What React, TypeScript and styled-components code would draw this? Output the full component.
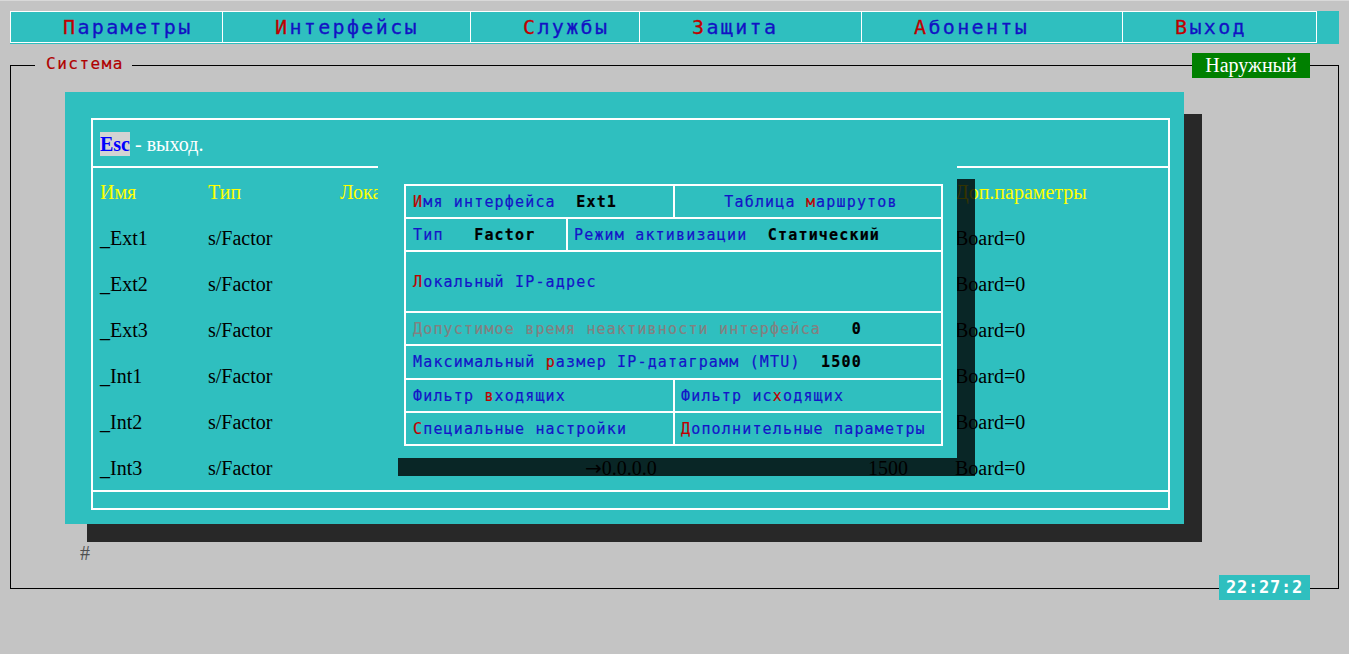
import React from 'react';
import styled, { createGlobalStyle } from 'styled-components';

const CYAN = '#2fbfbf';
const BG = '#c4c4c4';
const MONO = '"DejaVu Sans Mono", "Liberation Mono", monospace';
const SERIF = '"Liberation Serif", "Times New Roman", "DejaVu Serif", serif';

const GlobalStyle = createGlobalStyle`
  html, body { margin: 0; padding: 0; background: ${BG}; }
  body { font-family: ${SERIF}; }
`;

const Page = styled.div`
  width: 1349px;
  height: 654px;
  box-sizing: border-box;
  border-top: 1px solid #d9d9d9;
  overflow: hidden;
`;

/* ---------- top menu ---------- */
const MenuBar = styled.nav`
  margin: 10px 10px 0;
  height: 33px;
  background: ${CYAN};
  display: flex;
  align-items: flex-start;
`;

const MenuCell = styled.div<{ $w: number; $last?: boolean }>`
  width: ${(p) => p.$w}px;
  height: 32px;
  box-sizing: border-box;
  border: 1px solid #fff;
  border-right: ${(p) => (p.$last ? '1px solid #fff' : 'none')};
  padding-left: 52px;
  font-family: ${MONO};
  font-size: 20px;
  line-height: 30px;
  letter-spacing: 2.35px;
  color: #1212c4;
  -webkit-text-stroke: 0.3px currentColor;
  white-space: nowrap;
`;

const Hot = styled.span`
  color: #c00000;
`;

/* ---------- frame ---------- */
const Frame = styled.div`
  position: relative;
  margin: 21px 10px 0;
  border: 1px solid #000;
  padding: 26px 0 23px 54px;
`;

const Legend = styled.span`
  position: absolute;
  left: 24px;
  top: -12px;
  padding: 0 8px 0 11px;
  background: ${BG};
  color: #b00000;
  font-family: ${MONO};
  font-size: 16px;
  line-height: 20px;
  letter-spacing: 1.5px;
  -webkit-text-stroke: 0.2px currentColor;
`;

const ModeBadge = styled.span`
  position: absolute;
  top: -13px;
  right: 28px;
  width: 118px;
  height: 25px;
  background: #008000;
  color: #fff;
  font-family: ${SERIF};
  font-size: 20px;
  line-height: 25px;
  text-align: center;
`;

const Clock = styled.span`
  position: absolute;
  bottom: -12px;
  right: 28px;
  width: 91px;
  height: 25px;
  background: ${CYAN};
  color: #fff;
  font-family: ${MONO};
  font-weight: bold;
  font-size: 17px;
  line-height: 25px;
  letter-spacing: 0.8px;
  text-align: center;
`;

const Prompt = styled.div`
  margin: 18px 0 0 15px;
  font-family: ${SERIF};
  font-size: 20px;
  line-height: 23px;
  color: #505050;
`;

/* ---------- main window ---------- */
const Window = styled.section`
  position: relative;
  width: 1119px;
  box-sizing: border-box;
  padding: 26px 14px 14px 26px;
  background: ${CYAN};
  box-shadow: 20px 20px 0 -2px #282828;
`;

const InnerBox = styled.div`
  border: 2px solid #fff;
  font-family: ${SERIF};
  font-size: 20px;
`;

const EscRow = styled.div`
  height: 44px;
  padding: 2px 0 0 7px;
  line-height: 44px;
  border-bottom: 2px solid #fff;
  color: #fff;
  white-space: pre;
`;

const EscKey = styled.b`
  color: #0000ff;
  background: #d3d3d3;
  padding: 1px 0;
`;

const GridRow = styled.div<{ $head?: boolean }>`
  display: grid;
  grid-template-columns: 108px 132px 245px 283px 87px 1fr;
  box-sizing: border-box;
  height: 46px;
  padding: 2px 0 0 7px;
  line-height: 44px;
  color: ${(p) => (p.$head ? '#ffff00' : '#000')};
  white-space: nowrap;
`;

const Arrow = styled.span`
  font-family: "DejaVu Sans", sans-serif;
  font-size: 20px;
`;

const Footer = styled.div`
  height: 16px;
  border-top: 2px solid #fff;
`;

/* ---------- dialog ---------- */
const Dialog = styled.div`
  position: absolute;
  left: 313px;
  top: 67px;
  width: 579px;
  height: 299px;
  box-sizing: border-box;
  padding: 25px 14px 12px 26px;
  background: ${CYAN};
  box-shadow: 19px 19px 0 -1px rgba(0, 0, 0, 0.8);
  z-index: 2;
`;

const Sheet = styled.div`
  width: 539px;
  box-sizing: border-box;
  border: 2px solid #fff;
`;

const SheetRow = styled.div<{ $h: number }>`
  display: flex;
  height: ${(p) => p.$h}px;
  & + & {
    border-top: 2px solid #fff;
  }
`;

const SheetCell = styled.div<{ $w?: number; $center?: boolean }>`
  ${(p) => (p.$w ? `flex: 0 0 ${p.$w}px;` : 'flex: 1 1 auto;')}
  box-sizing: border-box;
  display: flex;
  align-items: center;
  justify-content: ${(p) => (p.$center ? 'center' : 'flex-start')};
  padding-left: ${(p) => (p.$center ? '0' : '7px')};
  font-family: ${MONO};
  font-size: 15px;
  letter-spacing: 1.17px;
  color: #1414c8;
  -webkit-text-stroke: 0.2px currentColor;
  & + & {
    border-left: 2px solid #fff;
    padding-left: ${(p) => (p.$center ? '0' : '6px')};
  }
`;

const CellText = styled.span`
  white-space: pre;
`;

const Val = styled.b`
  color: #000;
`;

const Dim = styled.span`
  color: #848080;
`;

const menu = [
  { w: 212, hot: 'П', rest: 'араметры' },
  { w: 248, hot: 'И', rest: 'нтерфейсы' },
  { w: 169, hot: 'С', rest: 'лужбы' },
  { w: 222, hot: 'З', rest: 'ащита' },
  { w: 261, hot: 'А', rest: 'боненты' },
  { w: 195, hot: 'В', rest: 'ыход' },
];

const rows = ['_Ext1', '_Ext2', '_Ext3', '_Int1', '_Int2', '_Int3'];

export default function App() {
  return (
    <>
      <GlobalStyle />
      <Page>
        <MenuBar>
          {menu.map((m, i) => (
            <MenuCell key={m.hot} $w={m.w} $last={i === menu.length - 1}>
              <Hot>{m.hot}</Hot>
              {m.rest}
            </MenuCell>
          ))}
        </MenuBar>

        <Frame>
          <Legend>Система</Legend>
          <ModeBadge>Наружный</ModeBadge>

          <Window>
            <InnerBox>
              <EscRow>
                <EscKey>Esc</EscKey> - выход.
              </EscRow>
              <GridRow $head>
                <span>Имя</span>
                <span>Тип</span>
                <span>Лока</span>
                <span></span>
                <span></span>
                <span>Доп.параметры</span>
              </GridRow>
              {rows.map((r, i) => {
                const last = i === rows.length - 1;
                return (
                  <GridRow key={r}>
                    <span>{r}</span>
                    <span>s/Factor</span>
                    <span></span>
                    <span>
                      {last && (
                        <>
                          <Arrow>→</Arrow>0.0.0.0
                        </>
                      )}
                    </span>
                    <span>{last ? '1500' : ''}</span>
                    <span>Board=0</span>
                  </GridRow>
                );
              })}
              <Footer />
            </InnerBox>

            <Dialog>
              <Sheet>
                <SheetRow $h={31}>
                  <SheetCell $w={267}>
                    <CellText>
                      <Hot>И</Hot>мя интерфейса{'  '}<Val>Ext1</Val>
                    </CellText>
                  </SheetCell>
                  <SheetCell $center>
                    <CellText>
                      Таблица <Hot>м</Hot>аршрутов
                    </CellText>
                  </SheetCell>
                </SheetRow>
                <SheetRow $h={31}>
                  <SheetCell $w={160}>
                    <CellText>
                      Тип{'   '}<Val>Factor</Val>
                    </CellText>
                  </SheetCell>
                  <SheetCell>
                    <CellText>
                      Режим активизации{'  '}<Val>Статический</Val>
                    </CellText>
                  </SheetCell>
                </SheetRow>
                <SheetRow $h={59}>
                  <SheetCell>
                    <CellText>
                      <Hot>Л</Hot>окальный IP-адрес
                    </CellText>
                  </SheetCell>
                </SheetRow>
                <SheetRow $h={31}>
                  <SheetCell>
                    <CellText>
                      <Dim>Допустимое время неактивности интерфейса</Dim>{'   '}<Val>0</Val>
                    </CellText>
                  </SheetCell>
                </SheetRow>
                <SheetRow $h={32}>
                  <SheetCell>
                    <CellText>
                      Максимальный <Hot>р</Hot>азмер IP-датаграмм (MTU){'  '}<Val>1500</Val>
                    </CellText>
                  </SheetCell>
                </SheetRow>
                <SheetRow $h={31}>
                  <SheetCell $w={267}>
                    <CellText>
                      Фильтр <Hot>в</Hot>ходящих
                    </CellText>
                  </SheetCell>
                  <SheetCell>
                    <CellText>
                      Фильтр ис<Hot>х</Hot>одящих
                    </CellText>
                  </SheetCell>
                </SheetRow>
                <SheetRow $h={31}>
                  <SheetCell $w={267}>
                    <CellText>
                      <Hot>С</Hot>пециальные настройки
                    </CellText>
                  </SheetCell>
                  <SheetCell>
                    <CellText>
                      <Hot>Д</Hot>ополнительные параметры
                    </CellText>
                  </SheetCell>
                </SheetRow>
              </Sheet>
            </Dialog>
          </Window>

          <Prompt>#</Prompt>
          <Clock>22:27:2</Clock>
        </Frame>
      </Page>
    </>
  );
}
